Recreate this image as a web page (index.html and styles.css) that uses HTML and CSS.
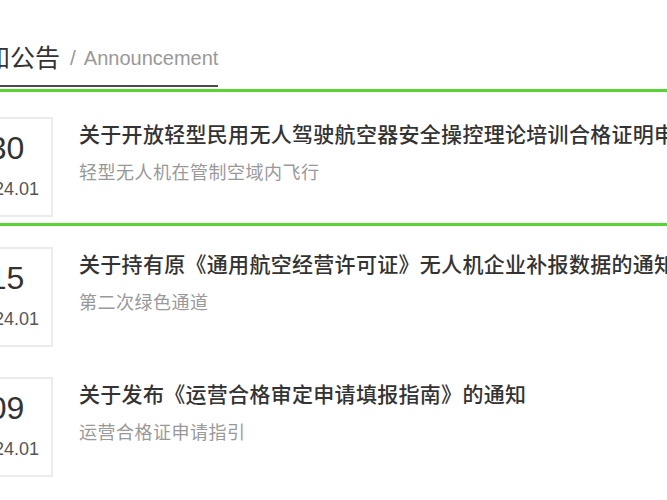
FILE: index.html
```html
<!DOCTYPE html>
<html lang="zh-CN">
<head>
<meta charset="utf-8">
<title>通知公告</title>
<link rel="stylesheet" href="styles.css">
</head>
<body>
<div class="wrap">
  <div class="head">
    <span class="head-title"><span class="cn">通知公告</span><span class="slash">/</span><span class="en">Announcement</span></span>
  </div>
  <ul class="list">
    <li class="item active">
      <div class="date"><div class="day">30</div><div class="ym">2024.01</div></div>
      <div class="info">
        <div class="title">关于开放轻型民用无人驾驶航空器安全操控理论培训合格证明申请的通知</div>
        <div class="sub">轻型无人机在管制空域内飞行</div>
      </div>
    </li>
    <li class="item">
      <div class="date"><div class="day">15</div><div class="ym">2024.01</div></div>
      <div class="info">
        <div class="title">关于持有原《通用航空经营许可证》无人机企业补报数据的通知</div>
        <div class="sub">第二次绿色通道</div>
      </div>
    </li>
    <li class="item">
      <div class="date"><div class="day">09</div><div class="ym">2024.01</div></div>
      <div class="info">
        <div class="title">关于发布《运营合格审定申请填报指南》的通知</div>
        <div class="sub">运营合格证申请指引</div>
      </div>
    </li>
  </ul>
</div>
</body>
</html>
```
FILE: styles.css
```css
html, body {
  margin: 0;
  padding: 0;
  background: #fff;
  overflow: hidden;
}
body {
  font-family: "Liberation Sans", "Noto Sans CJK SC", sans-serif;
  color: #333;
}
.wrap {
  width: 780px;
  margin-left: -41px;
}
.head {
  padding: 38px 0 2px 1px;
  border-bottom: 3px solid #5ad335;
}
.head-title {
  display: inline-flex;
  align-items: center;
  height: 36px;
  padding-bottom: 11px;
  border-bottom: 2px solid #4a4a50;
}
.cn {
  font-family: "Noto Sans CJK SC", sans-serif;
  font-size: 25px;
  color: #333;
}
.slash {
  font-size: 21px;
  color: #999;
  margin: 3px 8px 0 10px;
}
.en {
  font-size: 20px;
  color: #999;
  margin-top: 4px;
}
.list {
  list-style: none;
  margin: 0;
  padding: 0;
}
.item {
  display: flex;
  align-items: flex-start;
  padding: 21px 0 9px;
}
.item.active {
  padding: 25px 0 6px;
  border-bottom: 3px solid #5ad335;
}
.date {
  box-sizing: border-box;
  width: 94px;
  height: 100px;
  border: 2px solid #ebebeb;
  padding: 9px 0 0 1px;
  text-align: center;
  flex-shrink: 0;
}
.day {
  font-size: 32px;
  line-height: 40px;
  color: #333;
}
.ym {
  margin-top: 9px;
  font-size: 18px;
  line-height: 24px;
  color: #555;
}
.info {
  margin-left: 26px;
  font-family: "Noto Sans CJK SC", sans-serif;
  white-space: nowrap;
}
.title {
  margin-top: 1px;
  font-size: 21px;
  line-height: 30px;
  font-weight: 500;
  letter-spacing: 0.3px;
  color: #333;
}
.sub {
  margin-top: 9px;
  font-size: 18px;
  line-height: 28px;
  letter-spacing: 0.5px;
  color: #999;
}
```
